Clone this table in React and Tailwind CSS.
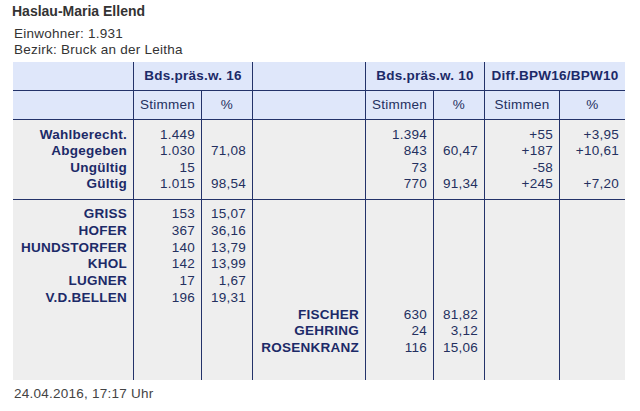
import React from "react";

const F = { fontFamily: '"Liberation Sans", Arial, Helvetica, sans-serif' };

function Lines({ items, bold, className = "" }) {
  return (
    <div className={className}>
      {items.map((t, i) => (
        <div key={i} className={bold ? "font-bold text-[#1c2a68]" : "text-[#24305f]"}>
          {t === "" ? "\u00a0" : t}
        </div>
      ))}
    </div>
  );
}

export default function App() {
  const c = "border-l border-[#233269]";
  const b1 = [
    ["Wahlberecht.", "Abgegeben", "Ungültig", "Gültig"],
    ["1.449", "1.030", "15", "1.015"],
    ["", "71,08", "", "98,54"],
    ["", "", "", ""],
    ["1.394", "843", "73", "770"],
    ["", "60,47", "", "91,34"],
    ["+55", "+187", "-58", "+245"],
    ["+3,95", "+10,61", "", "+7,20"],
  ];
  const b2 = [
    ["GRISS", "HOFER", "HUNDSTORFER", "KHOL", "LUGNER", "V.D.BELLEN"],
    ["153", "367", "140", "142", "17", "196"],
    ["15,07", "36,16", "13,79", "13,99", "1,67", "19,31"],
    ["", "", "", "", "", "", "FISCHER", "GEHRING", "ROSENKRANZ"],
    ["", "", "", "", "", "", "630", "24", "116"],
    ["", "", "", "", "", "", "81,82", "3,12", "15,06"],
    [],
    [],
  ];
  return (
    <div style={F} className="w-[640px] h-[411px] bg-white text-[13.5px] tracking-[0.25px]">
      <div className="pt-[3px] pl-[12px] h-[19px] text-[14px] leading-[16px] font-bold text-[#333333] tracking-normal">
        Haslau-Maria Ellend
      </div>
      <div className="mt-[7px] pl-[14px] leading-[15.5px] text-[#333333]">
        <div>Einwohner: 1.931</div>
        <div>Bezirk: Bruck an der Leitha</div>
      </div>
      <div className="mt-[5px] ml-[13px] w-[612px] grid grid-cols-[120px_68px_51px_113px_68px_51px_75px_66px]">
        <div className="h-[29px] bg-[#dfe7fa] border-b border-[#233269]" />
        <div className={`col-span-2 h-[29px] bg-[#dfe7fa] border-b border-[#233269] ${c} flex items-center justify-center font-bold text-[#1c2a68]`}>
          Bds.präs.w. 16
        </div>
        <div className={`h-[29px] bg-[#dfe7fa] border-b border-[#233269] ${c}`} />
        <div className={`col-span-2 h-[29px] bg-[#dfe7fa] border-b border-[#233269] ${c} flex items-center justify-center font-bold text-[#1c2a68]`}>
          Bds.präs.w. 10
        </div>
        <div className={`col-span-2 h-[29px] bg-[#dfe7fa] border-b border-[#233269] ${c} flex items-center justify-center font-bold text-[#1c2a68]`}>
          Diff.BPW16/BPW10
        </div>
        {["", "Stimmen", "%", "", "Stimmen", "%", "Stimmen", "%"].map((t, i) => (
          <div
            key={i}
            className={`h-[29px] bg-[#dfe7fa] border-b border-[#233269] ${i > 0 ? c : ""} flex items-center justify-center text-[#24305f]`}
          >
            {t}
          </div>
        ))}
        {b1.map((col, i) => (
          <div
            key={i}
            className={`h-[80px] bg-[#eeeeee] border-b border-[#233269] ${i > 0 ? c : ""} pt-[7px] pr-[6px] text-right leading-[16.3px]`}
          >
            <Lines items={col} bold={i === 0 || i === 3} />
          </div>
        ))}
        {b2.map((col, i) => (
          <div
            key={i}
            className={`h-[180px] bg-[#eeeeee] ${i > 0 ? c : ""} pt-[6px] pr-[6px] text-right leading-[16.75px]`}
          >
            <Lines items={col} bold={i === 0 || i === 3} />
          </div>
        ))}
      </div>
      <div className="mt-[6px] pl-[14px] leading-[16px] text-[#444444]">24.04.2016, 17:17 Uhr</div>
    </div>
  );
}
